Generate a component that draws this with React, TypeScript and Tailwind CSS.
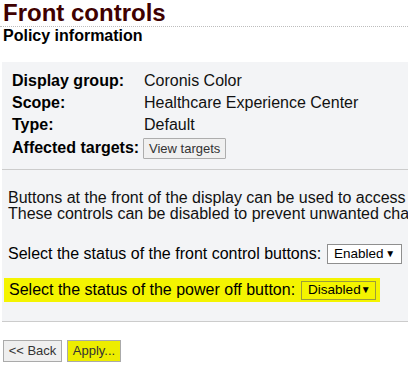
import React from "react";

// Small native-looking dropdown (static, only for the picture)
function FakeSelect({ value, yellow }: { value: string; yellow?: boolean }) {
  return (
    <span
      className={`inline-flex items-center justify-between w-[75px] pl-[6px] pr-[6px] text-[13.5px] text-black border ${
        yellow ? "h-[19px] bg-[#f4f400] border-[#9c9c3a]" : "h-[20px] bg-white border-[#8f8f8f]"
      }`}
    >
      <span>{value}</span>
      <span className="text-[10px] leading-none">▼</span>
    </span>
  );
}

const info = [
  { label: "Display group:", value: "Coronis Color" },
  { label: "Scope:", value: "Healthcare Experience Center" },
  { label: "Type:", value: "Default" },
];

export default function App() {
  return (
    <div className="w-[408px] h-[369px] overflow-hidden bg-white text-black font-['Liberation_Sans',Arial,sans-serif]">
      {/* Header */}
      <div className="border-b border-dotted border-[#bdbdbd] pb-[1px]">
        <h1 className="pl-[3px] text-[24px] leading-[25px] font-bold text-[#3f0000]">Front controls</h1>
      </div>
      <h2 className="pl-[3px] text-[16px] leading-[18px] font-bold">Policy information</h2>

      {/* Panel */}
      <div className="ml-[2px] mt-[17px] bg-[#f3f4f6] border-b border-[#cccccc]">
        <div className="pt-[8px] pb-[9px] pl-[10px] border-b border-[#cccccc] text-[16px]">
          {info.map((r) => (
            <div key={r.label} className="flex h-[22px] items-center">
              <span className="w-[132px] font-bold">{r.label}</span>
              <span className="text-[#111]">{r.value}</span>
            </div>
          ))}
          <div className="flex h-[24px] items-center">
            <span className="w-[131px] font-bold">Affected targets:</span>
            <button className="h-[21px] px-[5px] text-[13px] text-[#333] bg-[#f0f0f0] border border-[#adadad] rounded-[1px]">
              View targets
            </button>
          </div>
        </div>

        <div className="pl-[6px] pt-[20px] pb-[19px] text-[16px]">
          {/* the long lines run past the window edge, as in the original page */}
          <div className="leading-[16px] whitespace-nowrap text-[#111]">
            <div>Buttons at the front of the display can be used to access the display settings.</div>
            <div>These controls can be disabled to prevent unwanted changes.</div>
          </div>
          <div className="mt-[20px] flex h-[24px] items-center gap-[6px] whitespace-nowrap">
            <span>Select the status of the front control buttons:</span>
            <FakeSelect value="Enabled" />
          </div>
          <div className="mt-[12px] -ml-[4px] inline-flex h-[24px] items-center gap-[6px] pl-[5px] pr-[4px] bg-[#f4f400] whitespace-nowrap">
            <span>Select the status of the power off button:</span>
            <FakeSelect value="Disabled" yellow />
          </div>
        </div>
      </div>

      {/* Actions */}
      <div className="mt-[18px] ml-[3px] flex gap-[5px]">
        <button className="h-[22px] w-[59px] text-[13px] text-[#333] bg-[#efefef] border border-[#aaaaaa]">
          &lt;&lt; Back
        </button>
        <button className="h-[22px] w-[54px] text-[13px] text-[#333] bg-[#eded00] border border-[#aaaaaa]">
          Apply...
        </button>
      </div>
    </div>
  );
}
